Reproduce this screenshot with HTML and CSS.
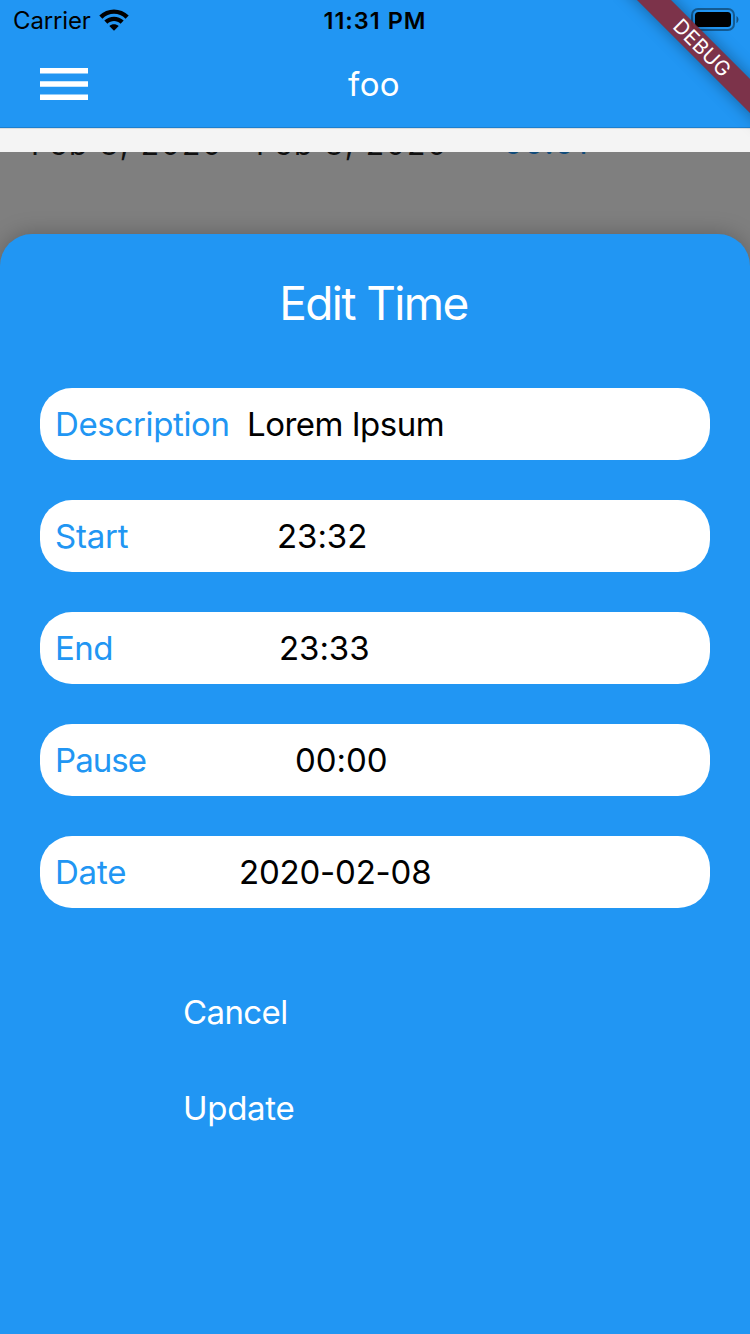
FILE: index.html
```html
<!DOCTYPE html>
<html lang="en">
<head>
<meta charset="utf-8">
<title>foo</title>
<link rel="stylesheet" href="styles.css">
</head>
<body>
<div class="screen">
  <header class="header">
    <div class="status">
      <div class="status-left">
        <span class="carrier">Carrier</span>
        <svg class="wifi" width="30" height="22" viewBox="0 0 30 22">
          <path d="M0.3 6.6C8.2-1.7 21.8-1.7 29.7 6.6L26.6 9.7C20.3 3.2 9.7 3.2 3.4 9.7Z"/>
          <path d="M5.3 11.6C10.8 6.3 19.2 6.3 24.7 11.6L21.6 14.7C17.9 11.2 12.1 11.2 8.4 14.7Z"/>
          <path d="M10.3 17C13 14.500 17 14.500 19.7 17L15 21.8Z"/>
        </svg>
      </div>
      <span class="clock">11:31 PM</span>
      <div class="status-right">
        <svg width="48" height="24" viewBox="0 0 48 24">
          <rect x="1" y="1" width="42" height="21" rx="6" fill="none" stroke="#000" stroke-opacity=".4" stroke-width="2"/>
          <rect x="4" y="4" width="36" height="15" rx="3.5"/>
          <path d="M45.5 8c2.6 1.600 2.600 5.600 0 7.200z" fill-opacity=".45"/>
        </svg>
      </div>
    </div>
    <div class="navbar">
      <svg class="menu" width="48" height="32" viewBox="0 0 48 32">
        <path d="M0 0h48v5.500H0zM0 13.300h48v5.400H0zM0 26.500h48V32H0z"/>
      </svg>
      <span class="title">foo</span>
    </div>
  </header>
  <div class="strip"></div>
  <main class="backdrop">
    <div class="entry">
      <span class="range-from">Feb 8, 2020</span>
      <span class="range-to">Feb 8, 2020</span>
      <span class="duration">00:01</span>
    </div>
    <section class="sheet">
      <h1 class="sheet-title">Edit Time</h1>
      <div class="fields">
        <div class="field"><span class="label l-desc">Description</span><span class="value v-desc">Lorem Ipsum</span></div>
        <div class="field"><span class="label l-start">Start</span><span class="value v-start">23:32</span></div>
        <div class="field"><span class="label l-end">End</span><span class="value v-end">23:33</span></div>
        <div class="field"><span class="label l-pause">Pause</span><span class="value v-pause">00:00</span></div>
        <div class="field"><span class="label l-date">Date</span><span class="value v-date">2020-02-08</span></div>
      </div>
      <div class="actions">
        <span class="action cancel">Cancel</span>
        <span class="action update">Update</span>
      </div>
    </section>
  </main>
  <div class="ribbon">DEBUG</div>
</div>
</body>
</html>
```
FILE: styles.css
```css
* { box-sizing: border-box; }
body { margin: 0; font-family: Inter, "Liberation Sans", sans-serif; }
.screen {
  position: relative;
  width: 750px;
  height: 1334px;
  overflow: hidden;
  display: flex;
  flex-direction: column;
  background: #2196f3;
}
svg { display: block; flex: none; }
span { white-space: nowrap; }
.header { height: 128px; border-bottom: 1px solid #1c7fcf; background: #2196f3; }
.status {
  height: 40px;
  display: grid;
  grid-template-columns: 1fr auto 1fr;
  align-items: center;
  font-size: 24px;
  line-height: 38px;
}
.status-left { display: flex; align-items: center; gap: 8px; padding-left: 13px; }
.carrier { width: 78px; letter-spacing: -0.150px; padding-top: 2px; }
.clock { font-weight: 600; font-size: 23.500px; letter-spacing: 1px; padding-top: 2px; }
.status-right { display: flex; justify-content: flex-end; padding-right: 11px; }
.navbar {
  height: 87px;
  display: grid;
  grid-template-columns: 1fr auto 1fr;
  align-items: center;
  padding: 0 42px 0 40px;
  color: #fff;
}
.menu { fill: #fff; }
.title { font-size: 33px; letter-spacing: 0.4px; padding-top: 1px; }
.strip { height: 24px; background: #f4f4f4; border-top: 1px solid #dcdcdc; }
.backdrop {
  flex: 1;
  display: flex;
  flex-direction: column;
  overflow: hidden;
  background: #7f7f7f;
}
.entry {
  flex: none;
  display: grid;
  grid-template-columns: 225px 247px 1fr;
  padding-left: 31px;
  line-height: 40px;
  margin-top: -28px;
  height: 110px;
  font-size: 30px;
  letter-spacing: 2px;
  color: #111;
}
.duration { color: #104b7a; font-size: 32px; letter-spacing: 0.500px; line-height: 38px; }
.sheet {
  flex: 1;
  border-radius: 32px 32px 0 0;
  background: #2196f3;
  box-shadow: 0 0 22px rgba(0, 0, 0, .25);
}
.sheet-title {
  margin: 0;
  padding: 39px 3px 0 0;
  font-size: 46px;
  line-height: 60px;
  font-weight: 400;
  letter-spacing: -1.600px;
  text-align: center;
  color: #fff;
}
.fields { display: flex; flex-direction: column; gap: 40px; padding: 55px 40px 0; }
.field {
  height: 72px;
  display: flex;
  align-items: center;
  border-radius: 32px;
  background: #fff;
  font-size: 33px;
  line-height: 40px;
  padding: 0 0 1px 15px;
}
.label { color: #2196f3; letter-spacing: -0.200px; }
.value { color: #000; letter-spacing: -0.050px; }
.v-date { letter-spacing: -0.200px; }
.v-desc { letter-spacing: -0.500px; }
.l-desc { width: 192px; letter-spacing: -0.350px; }
.l-start { width: 222px; }
.l-end { width: 224px; letter-spacing: -0.500px; }
.l-pause { width: 240px; letter-spacing: -0.950px; }
.l-date { width: 184px; }
.actions { display: flex; flex-direction: column; gap: 56px; padding: 84px 0 0 183px; }
.action { font-size: 33px; line-height: 40px; color: #fff; }
.cancel { letter-spacing: -0.600px; }
.update { letter-spacing: -0.300px; }
.ribbon {
  position: absolute;
  left: 602px;
  top: 36px;
  width: 200px;
  height: 24px;
  transform: rotate(45deg);
  background: rgba(140, 35, 45, .86);
  box-shadow: 0 0 16px rgba(0, 0, 0, .36);
  color: #fff;
  font-size: 20.400px;
  letter-spacing: 0.200px;
  line-height: 24px;
  text-align: center;
}
```
